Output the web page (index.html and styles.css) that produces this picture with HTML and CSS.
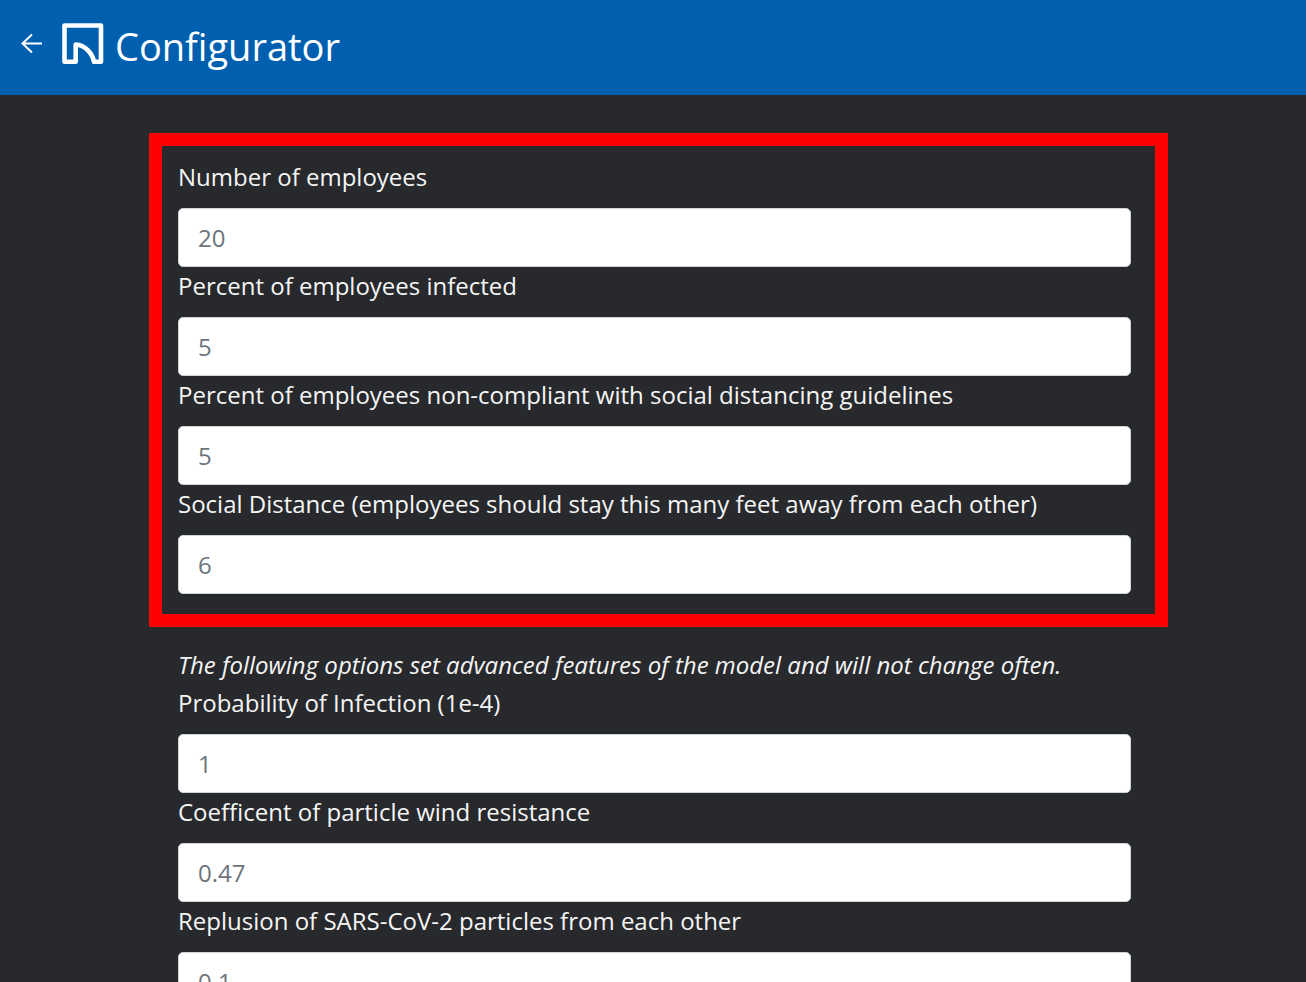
FILE: index.html
```html
<!DOCTYPE html>
<html lang="en">
<head>
<meta charset="utf-8">
<title>Configurator</title>
<link rel="stylesheet" href="styles.css">
</head>
<body>
<header class="topbar">
  <a class="back" href="#" aria-label="Back">
    <svg width="24" height="24" viewBox="0 0 24 24" fill="none" stroke="#fff" stroke-width="2"><path d="M22 11.500H3M12 2.500L2.500 11.500L12 20.500"/></svg>
  </a>
  <svg class="logo" width="42" height="42" viewBox="0 0 42 42" fill="none" stroke="#fff" stroke-width="4.600" stroke-linejoin="round"><path d="M2.500 38.700V2.500H39V38.700H32C30.500 31 23.500 22 13.700 21.500V38.700Z"/></svg>
  <h1 class="title">Configurator</h1>
</header>
<main class="page">
  <form class="form">
    <section class="group highlight">
      <label class="label" for="employees">Number of employees</label>
      <input class="input" id="employees" type="text" placeholder="20">
      <label class="label" for="infected">Percent of employees infected</label>
      <input class="input" id="infected" type="text" placeholder="5">
      <label class="label" for="noncompliant">Percent of employees non-compliant with social distancing guidelines</label>
      <input class="input" id="noncompliant" type="text" placeholder="5">
      <label class="label" for="distance">Social Distance (employees should stay this many feet away from each other)</label>
      <input class="input" id="distance" type="text" placeholder="6">
    </section>
    <section class="group">
      <p class="note">The following options set advanced features of the model and will not change often.</p>
      <label class="label" for="probability">Probability of Infection (1e-4)</label>
      <input class="input" id="probability" type="text" placeholder="1">
      <label class="label" for="resistance">Coefficent of particle wind resistance</label>
      <input class="input" id="resistance" type="text" placeholder="0.47">
      <label class="label" for="repulsion">Replusion of SARS-CoV-2 particles from each other</label>
      <input class="input" id="repulsion" type="text" placeholder="0.1">
    </section>
  </form>
</main>
</body>
</html>
```
FILE: styles.css
```css
* { box-sizing: border-box; }
html { height: 100%; overflow: hidden; }
body {
  margin: 0;
  height: 100%;
  overflow: hidden;
  background: #27292d;
  color: #f5f5f5;
  font-family: "Segoe UI", "Open Sans", "Noto Sans", sans-serif;
  font-size: 24px;
  line-height: 38px;
}
.topbar {
  display: flex;
  align-items: center;
  padding: 0 20px 7px;
  height: 95px;
  background: #005faf;
}
.back { display: flex; margin-right: 18px; }
.logo { margin-right: 11px; }
.title { margin: 0; padding-top: 4px; color: #fff; font-size: 38px; font-weight: 400; line-height: 48px; }
.page { padding: 38px 138px 0 149px; }
.group { display: flex; flex-direction: column; padding: 19px 37px 0 29px; }
.highlight { padding: 12px 24px 20px 16px; border: 13px solid #f00; }
.label { margin-bottom: 12px; }
.note { margin: 0; font-style: italic; }
.input {
  height: 59px;
  width: 100%;
  padding: 0 19px;
  border: 1px solid #ced4da;
  border-radius: 5px;
  background: #fff;
  color: #495057;
  font: inherit;
}
.input::placeholder { color: #6c757d; opacity: 1; }
```
